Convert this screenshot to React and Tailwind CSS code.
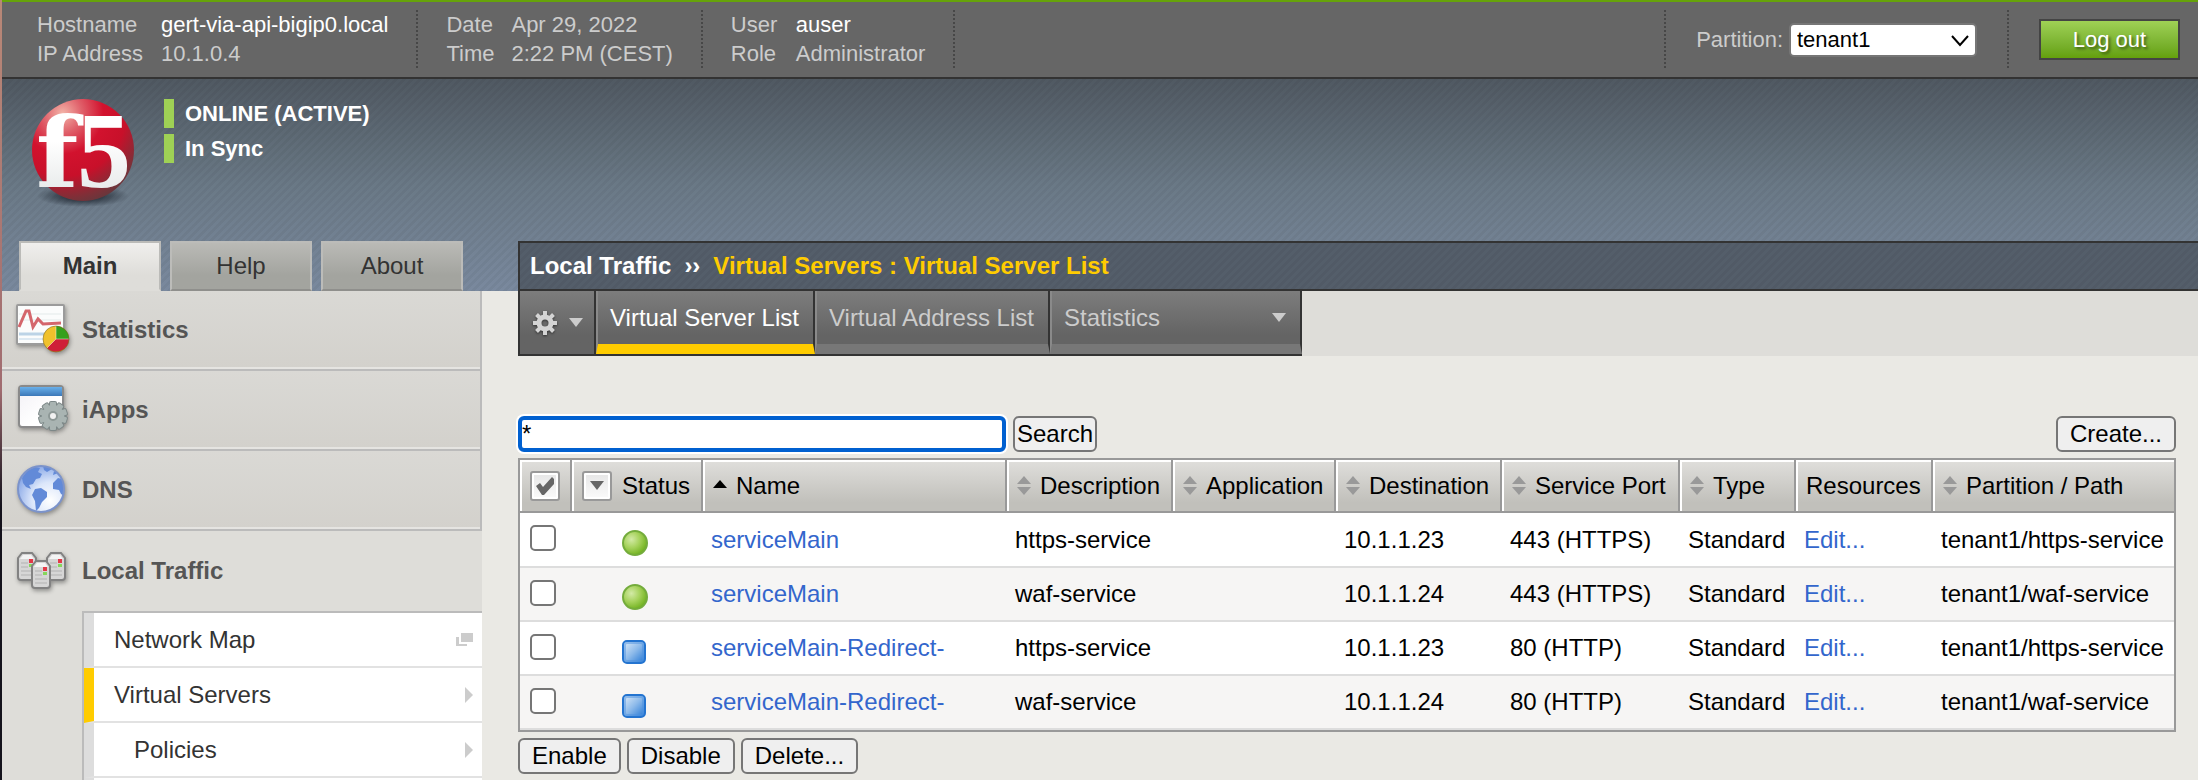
import React from "react";

const STRIPES =
  "bg-[linear-gradient(135deg,rgba(0,0,0,0.04)_25%,transparent_25%,transparent_50%,rgba(0,0,0,0.04)_50%,rgba(0,0,0,0.04)_75%,transparent_75%)] bg-[length:8px_8px]";

const BUTTON =
  "h-9 rounded-md border-2 border-[#767676] bg-[#efefef] text-black flex items-center justify-center";

function Dots() {
  return (
    <div className="h-[59px] w-[2px] shrink-0 bg-[repeating-linear-gradient(to_bottom,#474747_0px,#474747_2px,transparent_2px,transparent_4px)]" />
  );
}

function Facts({ rows, labelWidth }) {
  return (
    <dl className="text-[22px] leading-[29px] text-[#cccccc]">
      {rows.map(([label, value, strong]) => (
        <div key={label} className="flex">
          <dt className={labelWidth}>{label}</dt>
          <dd className={strong ? "text-white" : ""}>{value}</dd>
        </div>
      ))}
    </dl>
  );
}

function TopBar() {
  return (
    <div className="flex items-start justify-between border-t-2 border-b-2 border-t-[#66a30a] border-b-[#333333] bg-[#666666] pt-2 pb-[8px]">
      <div className="flex h-[59px] gap-7 pl-[35px]">
        <Facts
          labelWidth="w-[124px]"
          rows={[
            ["Hostname", "gert-via-api-bigip0.local", true],
            ["IP Address", "10.1.0.4"],
          ]}
        />
        <Dots />
        <Facts
          labelWidth="w-[65px]"
          rows={[
            ["Date", "Apr 29, 2022"],
            ["Time", "2:22 PM (CEST)"],
          ]}
        />
        <Dots />
        <Facts
          labelWidth="w-[65px]"
          rows={[
            ["User", "auser", true],
            ["Role", "Administrator"],
          ]}
        />
        <Dots />
      </div>
      <div className="flex h-[59px] items-center gap-[30px] pr-[18px] text-[22px]">
        <Dots />
        <div className="flex items-center gap-[6px]">
          <label htmlFor="partition" className="text-[#cccccc]">
            Partition:
          </label>
          <div className="relative">
            <select
              id="partition"
              className="h-[34px] w-[188px] appearance-none rounded-[5px] border-2 border-[#767676] bg-white pl-[6px] text-[22px] leading-[28px] text-black"
              defaultValue="tenant1"
            >
              <option>tenant1</option>
            </select>
            <svg
              className="pointer-events-none absolute top-3 right-2"
              width="18"
              height="12"
              viewBox="0 0 18 12"
              fill="none"
              stroke="#000"
              strokeWidth="2"
            >
              <path d="M1 1l8 9 8-9" />
            </svg>
          </div>
        </div>
        <Dots />
        <button className="h-[41px] w-[141px] border-2 border-[#444444] bg-gradient-to-b from-[#9fd155] to-[#64a00a] text-white [text-shadow:2px_2px_3px_rgba(0,0,0,0.5)]">
          Log out
        </button>
      </div>
    </div>
  );
}

function Logo() {
  return (
    <svg width="112" height="136" viewBox="0 -12 112 136" aria-label="f5">
      <defs>
        <radialGradient id="ball" cx="0.3" cy="0.14" r="0.95">
          <stop offset="0" stopColor="#f3b3a8" />
          <stop offset="0.2" stopColor="#e0606a" />
          <stop offset="0.42" stopColor="#d2122e" />
          <stop offset="0.65" stopColor="#c8102a" />
          <stop offset="0.88" stopColor="#7d3038" />
          <stop offset="1" stopColor="#5d3a3e" />
        </radialGradient>
        <linearGradient id="letters" x1="0" y1="0" x2="0" y2="1">
          <stop offset="0.4" stopColor="#ffffff" />
          <stop offset="1" stopColor="#dfe3e3" />
        </linearGradient>
        <radialGradient id="ballShade">
          <stop offset="0.3" stopColor="#1c242e" stopOpacity="0.85" />
          <stop offset="1" stopColor="#1c242e" stopOpacity="0" />
        </radialGradient>
      </defs>
      <ellipse cx="56" cy="98" rx="46" ry="11" fill="url(#ballShade)" />
      <circle cx="56" cy="52" r="51" fill="url(#ball)" />
      <g fill="url(#letters)" fontWeight="bold">
        <text x="9" y="89" fontSize="98" fontFamily="DejaVu Serif, serif">
          f
        </text>
        <text x="50" y="89" fontSize="108" fontFamily="Liberation Serif, serif">
          5
        </text>
      </g>
    </svg>
  );
}

function Status({ children }) {
  return (
    <div className="flex h-[29px] items-center border-l-[10px] border-[#9fd155] pl-[11px] text-[22px] font-bold text-white">
      {children}
    </div>
  );
}

function Tab({ active, children }) {
  return (
    <button
      className={
        "h-[50px] w-[142px] border-2 text-[24px] text-[#333333] " +
        (active
          ? "border-[#bbbbb8] border-b-[#deddd9] bg-gradient-to-b from-[#f0efed] to-[#deddd9] to-70% font-bold"
          : "border-[#bcbcb9] border-b-[#8f8f8c] bg-gradient-to-b from-[#babab6] to-[#a3a49f] to-70%")
      }
    >
      {children}
    </button>
  );
}

function Header() {
  return (
    <header className="bg-gradient-to-b from-[#505962] via-[#6a7986] to-[#7a899e]">
      <div className={"flex h-[212px] " + STRIPES}>
        <div className="flex w-[516px] shrink-0 flex-col justify-between">
          <div className="flex items-start gap-[25px] pt-[7px] pl-[25px]">
            <Logo />
            <div className="flex flex-col gap-[6px] pt-[13px]">
              <Status>ONLINE (ACTIVE)</Status>
              <Status>In Sync</Status>
            </div>
          </div>
          <div className="flex gap-[9px] pl-[17px]">
            <Tab active>Main</Tab>
            <Tab>Help</Tab>
            <Tab>About</Tab>
          </div>
        </div>
        <div
          className={
            "flex h-[50px] flex-1 items-center gap-[13px] self-end border-2 border-r-0 border-[#333333] bg-[#545e6a] pl-[10px] text-[24px] font-bold text-white " +
            STRIPES
          }
        >
          <span>Local Traffic</span>
          <span>››</span>
          <span className="text-[#ffcc00]">Virtual Servers : Virtual Server List</span>
        </div>
      </div>
    </header>
  );
}

function StatisticsIcon() {
  return (
    <svg width="58" height="58" viewBox="0 0 58 58" className="drop-shadow-[1px_2px_2px_rgba(0,0,0,0.35)]">
      <rect x="3" y="4" width="47" height="39" rx="1" fill="#fbfcfc" stroke="#9b9b9b" strokeWidth="2" />
      <path d="M5 13h42M5 19h42" stroke="#e3eaea" />
      <path d="M5 33h40" stroke="#bcd3e6" strokeWidth="3" />
      <path d="M5 38h38" stroke="#dde9f2" strokeWidth="2" />
      <path d="M5 26l7-16h3l4 16 5-8 5 5 18-1" fill="none" stroke="#d4666c" strokeWidth="3" />
      <circle cx="42" cy="38" r="13" fill="#f0c12c" />
      <path d="M42 38V25a13 13 0 0 1 13 13z" fill="#35a01c" />
      <path d="M42 38h13a13 13 0 0 1-22 9z" fill="#cf1f38" />
      <path d="M42 25v13h13M42 38l-9 9" stroke="#fff" strokeOpacity="0.45" fill="none" />
      <circle cx="42" cy="38" r="13" fill="none" stroke="#6b5a1c" strokeOpacity="0.5" />
    </svg>
  );
}

const TEETH = [0, 36, 72, 108, 144, 180, 216, 252, 288, 324];
const EIGHT_TEETH = [0, 45, 90, 135, 180, 225, 270, 315];

function AppsIcon() {
  return (
    <svg width="58" height="58" viewBox="0 0 58 58" className="drop-shadow-[1px_2px_2px_rgba(0,0,0,0.35)]">
      <defs>
        <linearGradient id="titleBar" x1="0" y1="0" x2="0" y2="1">
          <stop offset="0" stopColor="#69b0ea" />
          <stop offset="1" stopColor="#3c78b8" />
        </linearGradient>
        <linearGradient id="pane" x1="0" y1="0" x2="1" y2="1">
          <stop offset="0" stopColor="#f3f1f6" />
          <stop offset="0.6" stopColor="#ffffff" />
        </linearGradient>
      </defs>
      <rect x="5" y="5" width="44" height="41" rx="3" fill="url(#pane)" stroke="#8a8a8a" strokeWidth="2" />
      <rect x="6" y="6" width="42" height="9" fill="url(#titleBar)" />
      <g fill="#7d8888">
        {TEETH.map((a) => (
          <rect key={a} x="35" y="20" width="8" height="10" rx="2" transform={`rotate(${a} 39 35)`} />
        ))}
        <circle cx="39" cy="35" r="12" />
      </g>
      <g fill="#a9b4b2">
        {TEETH.map((a) => (
          <rect key={a} x="36" y="21" width="6" height="9" rx="1" transform={`rotate(${a} 39 35)`} />
        ))}
        <circle cx="39" cy="35" r="11" />
      </g>
      <circle cx="39" cy="35" r="4" fill="#f2f2f2" stroke="#8d9896" strokeWidth="2" />
    </svg>
  );
}

function GlobeIcon() {
  return (
    <svg width="58" height="58" viewBox="0 0 58 58" className="drop-shadow-[1px_2px_2px_rgba(0,0,0,0.35)]">
      <defs>
        <radialGradient id="sea" cx="0.7" cy="0.75" r="0.8">
          <stop offset="0" stopColor="#ffffff" />
          <stop offset="0.5" stopColor="#dbe6fa" />
          <stop offset="1" stopColor="#86a6e6" />
        </radialGradient>
        <clipPath id="globeClip">
          <circle cx="27" cy="28" r="23" />
        </clipPath>
      </defs>
      <circle cx="27" cy="28" r="23" fill="url(#sea)" />
      <g clipPath="url(#globeClip)" fill="#628ad8">
        <path d="M8 17l5-7 8-4 5 1-2 4 4 2-2 4-4 1-3 5-4 1 2 4-5-2-3-4z" />
        <path d="M29 5l6-1 3 4-5 3-3-2zM21 28l6-1 6 4 0 5-5 5-3 6-3 3-1-10-3-6z" />
        <path d="M39 22l5-5 8 2v17l-5-3-2-4-6-1zM44 12l-5 2 1-4z" />
      </g>
      <circle cx="27" cy="28" r="23" fill="none" stroke="#7b93cb" strokeWidth="2" />
    </svg>
  );
}

function ServerBox({ x, y }) {
  return (
    <g transform={`translate(${x} ${y})`}>
      <path
        d="M1 7l4-5h10l4 5v19q0 3-3 3H4q-3 0-3-3z"
        fill="#d6d6d6"
        stroke="#828282"
        strokeWidth="2"
      />
      <path d="M3 8l3-4h8l3 4z" fill="#f4f4f4" />
      <path d="M4 12h7M4 16h7M4 20h12M4 24h12" stroke="#b2b2b2" />
      <rect x="12" y="8" width="4" height="4" fill="#e23a48" />
      <rect x="12" y="13" width="4" height="3" fill="#86d65c" />
    </g>
  );
}

function ServersIcon() {
  return (
    <svg width="58" height="58" viewBox="0 0 58 58" className="drop-shadow-[1px_2px_2px_rgba(0,0,0,0.35)]">
      <ServerBox x={3} y={9} />
      <ServerBox x={32} y={9} />
      <ServerBox x={17} y={17} />
    </svg>
  );
}

function Module({ icon, open, children }) {
  return (
    <button
      className={
        "flex h-20 w-full items-center gap-[10px] pl-[12px] text-left text-[24px] font-bold text-[#555555] " +
        (open
          ? ""
          : "border-r-2 border-b-2 border-[#bbbbbb] bg-gradient-to-b from-[#dad9d5] to-[#d3d1cc] shadow-[inset_0_-2px_0_#e5e4e1]")
      }
    >
      {icon}
      <span>{children}</span>
    </button>
  );
}

function Submenu({ selected, indent, popup, children }) {
  return (
    <a
      href="#"
      className={
        "flex h-[55px] items-center justify-between border-b-2 border-l-[10px] border-b-[#e2e2e2] bg-white pr-[9px] text-[24px] text-[#333333] " +
        (selected ? "border-l-[#ffcc00] " : "border-l-[#dddddd] ") +
        (indent ? "pl-10" : "pl-5")
      }
    >
      {children}
      {popup ? (
        <svg width="17" height="13" viewBox="0 0 17 13" fill="#cccccc">
          <path d="M5 0h12v9H5zM0 4h3v7h8v2H0z" />
        </svg>
      ) : (
        <svg width="8" height="16" viewBox="0 0 8 16" fill="#cccccc">
          <path d="M0 0l8 8-8 8z" />
        </svg>
      )}
    </a>
  );
}

function Sidebar() {
  return (
    <nav className="flex w-[480px] shrink-0 flex-col bg-[#deddd9]">
      <Module icon={<StatisticsIcon />}>Statistics</Module>
      <Module icon={<AppsIcon />}>iApps</Module>
      <Module icon={<GlobeIcon />}>DNS</Module>
      <Module icon={<ServersIcon />} open>
        Local Traffic
      </Module>
      <div className="ml-20 flex flex-1 flex-col border-t-2 border-l-2 border-[#bbbbbb] bg-white">
        <Submenu popup>Network Map</Submenu>
        <Submenu selected>Virtual Servers</Submenu>
        <Submenu indent>Policies</Submenu>
        <div className="flex-1 border-l-[10px] border-[#dddddd]" />
      </div>
    </nav>
  );
}

function DownArrow() {
  return (
    <svg width="14" height="9" viewBox="0 0 14 9" fill="#cccccc">
      <path d="M0 0h14L7 9z" />
    </svg>
  );
}

function GearIcon() {
  return (
    <svg width="26" height="26" viewBox="0 0 26 26" className="drop-shadow-[0_1px_1px_rgba(0,0,0,0.5)]">
      <g fill="#d4d4d4">
        {EIGHT_TEETH.map((a) => (
          <rect key={a} x="11" y="1" width="4" height="6" transform={`rotate(${a} 13 13)`} />
        ))}
      </g>
      <circle cx="13" cy="13" r="6" fill="none" stroke="#d4d4d4" strokeWidth="5" />
    </svg>
  );
}

function NavTab({ active, wide, children }) {
  return (
    <button
      className={
        "flex items-center justify-between border-r-2 border-b-10 border-l-2 border-r-[#333333] border-l-[#8a8a8a] pr-[14px] pl-[12px] " +
        (active ? "border-b-[#ffcc00] text-white " : "border-b-[#777777] text-[#cccccc] ") +
        (wide ? "w-[252px]" : "")
      }
    >
      {children}
      {wide && <DownArrow />}
    </button>
  );
}

function NavBar() {
  return (
    <div className="flex bg-[#deddd9] text-[24px]">
      <div className="flex h-[65px] border-b-2 border-l-2 border-[#333333] bg-gradient-to-b from-[#7d7d7d] to-[#646464] to-70%">
        <button
          aria-label="Settings"
          className="flex w-[76px] items-center gap-[11px] border-r-2 border-[#333333] pl-[12px]"
        >
          <GearIcon />
          <DownArrow />
        </button>
        <NavTab active>Virtual Server List</NavTab>
        <NavTab>Virtual Address List</NavTab>
        <NavTab wide>Statistics</NavTab>
      </div>
    </div>
  );
}

function SortIcon({ up }) {
  return up ? (
    <svg width="14" height="19" viewBox="0 0 14 19" fill="#000">
      <path d="M0 12L7 4l7 8z" />
    </svg>
  ) : (
    <svg width="14" height="19" viewBox="0 0 14 19" fill="#999999">
      <path d="M0 8L7 0l7 8zM0 11h14l-7 8z" />
    </svg>
  );
}

const TH =
  "border-b-2 border-[#999999] border-r-2 last:border-r-0 p-0 text-left font-normal shadow-[inset_2px_2px_0_#ffffff]";

function SortTh({ up, children }) {
  return (
    <th className={TH}>
      <button className="flex items-center gap-[9px] pl-[10px]">
        <SortIcon up={up} />
        {children}
      </button>
    </th>
  );
}

const SMALL_BUTTON =
  "flex size-[30px] shrink-0 items-center justify-center rounded-[3px] border-2 border-[#999999] bg-gradient-to-b from-[#e6e6e6] to-[#fbfbfb] shadow-[inset_0_0_0_2px_#ffffff]";

function StatusIcon({ kind }) {
  return kind === "up" ? (
    <svg width="26" height="26" viewBox="0 0 26 26" role="img" aria-label="Available">
      <defs>
        <radialGradient id="green" cx="0.35" cy="0.35" r="0.7">
          <stop offset="0" stopColor="#d3eaa6" />
          <stop offset="0.5" stopColor="#a6d25c" />
          <stop offset="1" stopColor="#6eb01c" />
        </radialGradient>
      </defs>
      <circle cx="13" cy="13" r="12" fill="url(#green)" stroke="#74ac3c" strokeWidth="2" />
    </svg>
  ) : (
    <svg width="26" height="26" viewBox="0 0 26 26" role="img" aria-label="Unknown">
      <defs>
        <linearGradient id="blue" x1="0" y1="0" x2="1" y2="1">
          <stop offset="0.1" stopColor="#d2e4f6" />
          <stop offset="0.5" stopColor="#8dbaea" />
          <stop offset="1" stopColor="#1f74d4" />
        </linearGradient>
      </defs>
      <rect x="1" y="3" width="22" height="22" rx="4" fill="url(#blue)" stroke="#2474d0" strokeWidth="2" />
      <rect x="3" y="5" width="18" height="18" rx="2" fill="none" stroke="#4d92e0" strokeOpacity="0.5" strokeWidth="2" />
    </svg>
  );
}

const ROWS = [
  ["up", "serviceMain", "https-service", "10.1.1.23", "443 (HTTPS)", "tenant1/https-service"],
  ["up", "serviceMain", "waf-service", "10.1.1.24", "443 (HTTPS)", "tenant1/waf-service"],
  ["unknown", "serviceMain-Redirect-", "https-service", "10.1.1.23", "80 (HTTP)", "tenant1/https-service"],
  ["unknown", "serviceMain-Redirect-", "waf-service", "10.1.1.24", "80 (HTTP)", "tenant1/waf-service"],
];

const TD = "border-b-2 border-[#dddddd] p-0 pl-2";

function ServerTable() {
  return (
    <table className="w-full table-fixed border-separate border-spacing-0 border-2 border-[#999999] text-[24px] leading-[28px] whitespace-nowrap text-black">
      <colgroup>
        <col className="w-[52px]" />
        <col className="w-[131px]" />
        <col />
        <col className="w-[166px]" />
        <col className="w-[163px]" />
        <col className="w-[166px]" />
        <col className="w-[178px]" />
        <col className="w-[116px]" />
        <col className="w-[137px]" />
        <col className="w-[241px]" />
      </colgroup>
      <thead>
        <tr className="h-[53px] bg-gradient-to-b from-[#e0dfdc] to-[#c1c0bb] to-80%">
          <th className={TH}>
            <button aria-label="Select all" className={SMALL_BUTTON + " ml-[10px]"}>
              <svg width="20" height="20" viewBox="0 0 20 20" fill="#666666">
                <path d="M1 10l4-3 3 4 9-10 2 2v5L9 19H7z" />
              </svg>
            </button>
          </th>
          <th className={TH}>
            <div className="flex items-center gap-[10px] pl-[10px]">
              <button aria-label="Filter by status" className={SMALL_BUTTON}>
                <svg width="14" height="9" viewBox="0 0 14 9" fill="#666666">
                  <path d="M0 0h14L7 9z" />
                </svg>
              </button>
              Status
            </div>
          </th>
          <SortTh up>Name</SortTh>
          <SortTh>Description</SortTh>
          <SortTh>Application</SortTh>
          <SortTh>Destination</SortTh>
          <SortTh>Service Port</SortTh>
          <SortTh>Type</SortTh>
          <th className={TH}>
            <span className="pl-[10px]">Resources</span>
          </th>
          <SortTh>Partition / Path</SortTh>
        </tr>
      </thead>
      <tbody>
        {ROWS.map(([kind, name, description, destination, port, path], i) => (
          <tr key={i} className="h-[54px] bg-white first:h-[55px] even:bg-[#f6f5f4]">
            <td className={TD + " pb-[3px]"}>
              <input
                type="checkbox"
                aria-label={`Select ${name} ${destination}`}
                className="ml-[2px] block size-[26px] appearance-none rounded-[5px] border-2 border-[#767676] bg-white"
              />
            </td>
            <td className="border-b-2 border-[#dddddd] p-0 pt-[6px] pl-[50px]">
              <StatusIcon kind={kind} />
            </td>
            <td className={TD}>
              <a href="#" className="text-[#3366cc]">
                {name}
              </a>
            </td>
            <td className={TD}>{description}</td>
            <td className={TD}></td>
            <td className={TD}>{destination}</td>
            <td className={TD}>{port}</td>
            <td className={TD}>Standard</td>
            <td className={TD}>
              <a href="#" className="text-[#3366cc]">
                Edit...
              </a>
            </td>
            <td className={TD}>{path}</td>
          </tr>
        ))}
      </tbody>
    </table>
  );
}

export default function App() {
  return (
    <div className="flex min-h-screen bg-[#eae9e4] font-['Liberation_Sans',Arial,sans-serif]">
      <div className="w-[2px] shrink-0 bg-gradient-to-b from-[#b98877] via-[#a06c70] via-50% to-[#14121c] to-65%" />
      <div className="flex min-w-0 flex-1 flex-col">
        <TopBar />
        <Header />
        <div className="flex flex-1">
          <Sidebar />
          <main className="min-w-0 flex-1 pl-9">
            <NavBar />
            <div className="pt-[60px] pr-[22px] text-[24px]">
              <div className="mb-[6px] flex items-center justify-between">
                <div className="flex gap-[7px]">
                  <input
                    type="text"
                    aria-label="Search"
                    defaultValue="*"
                    className="h-9 w-[488px] rounded-md border-4 border-[#0060d0] bg-white text-black shadow-[0_0_0_2px_#ffffff] outline-none"
                  />
                  <button className={BUTTON + " px-[2px]"}>Search</button>
                </div>
                <button className={BUTTON + " px-3"}>Create...</button>
              </div>
              <ServerTable />
              <div className="flex gap-[6px] pt-[6px]">
                <button className={BUTTON + " px-3"}>Enable</button>
                <button className={BUTTON + " px-3"}>Disable</button>
                <button className={BUTTON + " px-3"}>Delete...</button>
              </div>
            </div>
          </main>
        </div>
      </div>
    </div>
  );
}
